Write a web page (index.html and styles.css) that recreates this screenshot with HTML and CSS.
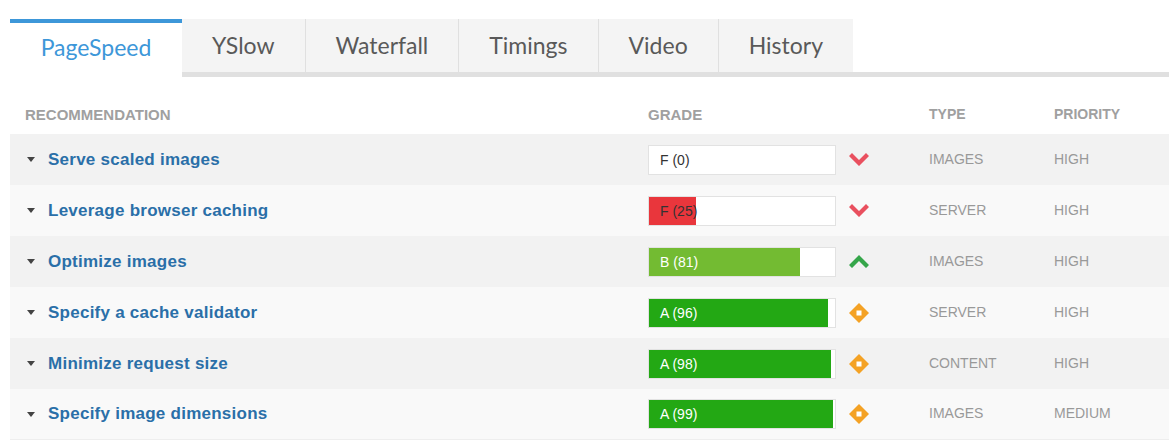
FILE: index.html
```html
<!DOCTYPE html>
<html>

<head>
    <meta charset="UTF-8">
    <link rel="stylesheet" href="styles.css">
</head>

<body>
    <div id="report">
        <ul class="tabs">
            <li class="tab active">PageSpeed</li>
            <li class="tab">YSlow</li>
            <li class="tab">Waterfall</li>
            <li class="tab">Timings</li>
            <li class="tab">Video</li>
            <li class="tab">History</li>
        </ul>

        <div class="rules">
            <div class="rule head">
                <div class="c_name">Recommendation</div>
                <div class="c_grade">Grade</div>
                <div class="c_type">Type</div>
                <div class="c_prio">Priority</div>
            </div>

            <div class="rule odd">
                <div class="c_name"><span class="caret"></span><a href="#">Serve scaled images</a></div>
                <div class="c_grade">
                    <div class="bar"><div class="fill f_red" style="width: 0%"></div><span class="score dark">F (0)</span></div>
                    <svg class="trend" width="20" height="13" viewBox="0 0 20 13"><path d="M0 3 L3 0 L10 7 L17 0 L20 3 L10 13 Z" fill="#e9505f"/></svg>
                </div>
                <div class="c_type">IMAGES</div>
                <div class="c_prio">HIGH</div>
            </div>

            <div class="rule even">
                <div class="c_name"><span class="caret"></span><a href="#">Leverage browser caching</a></div>
                <div class="c_grade">
                    <div class="bar"><div class="fill f_red" style="width: 25%"></div><span class="score dark">F (25)</span></div>
                    <svg class="trend" width="20" height="13" viewBox="0 0 20 13"><path d="M0 3 L3 0 L10 7 L17 0 L20 3 L10 13 Z" fill="#e9505f"/></svg>
                </div>
                <div class="c_type">SERVER</div>
                <div class="c_prio">HIGH</div>
            </div>

            <div class="rule odd">
                <div class="c_name"><span class="caret"></span><a href="#">Optimize images</a></div>
                <div class="c_grade">
                    <div class="bar"><div class="fill f_lime" style="width: 81%"></div><span class="score">B (81)</span></div>
                    <svg class="trend" width="20" height="13" viewBox="0 0 20 13"><path d="M0 10 L10 0 L20 10 L17 13 L10 6 L3 13 Z" fill="#35a64a"/></svg>
                </div>
                <div class="c_type">IMAGES</div>
                <div class="c_prio">HIGH</div>
            </div>

            <div class="rule even">
                <div class="c_name"><span class="caret"></span><a href="#">Specify a cache validator</a></div>
                <div class="c_grade">
                    <div class="bar"><div class="fill f_green" style="width: 96%"></div><span class="score">A (96)</span></div>
                    <svg class="trend" width="20" height="20" viewBox="0 0 20 20"><path d="M10 0 L20 10 L10 20 L0 10 Z" fill="#f4a225"/><rect x="7.5" y="7.5" width="5" height="5" fill="#fff"/></svg>
                </div>
                <div class="c_type">SERVER</div>
                <div class="c_prio">HIGH</div>
            </div>

            <div class="rule odd">
                <div class="c_name"><span class="caret"></span><a href="#">Minimize request size</a></div>
                <div class="c_grade">
                    <div class="bar"><div class="fill f_green" style="width: 98%"></div><span class="score">A (98)</span></div>
                    <svg class="trend" width="20" height="20" viewBox="0 0 20 20"><path d="M10 0 L20 10 L10 20 L0 10 Z" fill="#f4a225"/><rect x="7.5" y="7.5" width="5" height="5" fill="#fff"/></svg>
                </div>
                <div class="c_type">CONTENT</div>
                <div class="c_prio">HIGH</div>
            </div>

            <div class="rule even">
                <div class="c_name"><span class="caret"></span><a href="#">Specify image dimensions</a></div>
                <div class="c_grade">
                    <div class="bar"><div class="fill f_green" style="width: 99%"></div><span class="score">A (99)</span></div>
                    <svg class="trend" width="20" height="20" viewBox="0 0 20 20"><path d="M10 0 L20 10 L10 20 L0 10 Z" fill="#f4a225"/><rect x="7.5" y="7.5" width="5" height="5" fill="#fff"/></svg>
                </div>
                <div class="c_type">IMAGES</div>
                <div class="c_prio">MEDIUM</div>
            </div>
        </div>
    </div>
</body>

</html>
```

FILE: styles.css
```css
body {
    padding: 0;
    margin: 0;
    background-color: #ffffff;
    font-family: "Liberation Sans", Arial, sans-serif;
}

#report {
    padding-top: 19px;
    margin-left: 10px;
}

/* tabs */

.tabs {
    display: flex;
    margin: 0;
    padding: 0;
    list-style: none;
    border-bottom: 5px solid #e0e0e0;
}

.tabs .tab {
    height: 53px;
    line-height: 53px;
    padding: 0 30px;
    background-color: #f4f4f4;
    font-family: Lato, "Open Sans", sans-serif;
    font-size: 23px;
    color: #595959;
    box-sizing: border-box;
}

.tabs .tab:not(.active) + .tab {
    border-left: 1px solid #e0e0e0;
}

.tabs .active {
    width: 172px;
    height: 58px;
    margin-bottom: -5px;
    padding: 0;
    text-align: center;
    line-height: 49px;
    background-color: #ffffff;
    border-top: 4px solid #3d97d9;
    color: #3d97d9;
}

/* rules table */

.rules {
    margin-top: 17px;
}

.rule {
    display: grid;
    grid-template-columns: 623px 281px 125px 1fr;
    align-items: center;
    height: 51px;
}

.rule > div {
    padding-left: 15px;
}

.rule.head {
    height: 40px;
    font-size: 15px;
    font-weight: bold;
    color: #a0a0a0;
    text-transform: uppercase;
}

.rule.odd {
    background-color: #f2f2f2;
}

.rule.even {
    background-color: #f9f9f9;
}

.rule:last-child {
    border-bottom: 1px solid #eeeeee;
    height: 50px;
}

.c_name {
    display: flex;
    align-items: center;
}

.c_name .caret {
    width: 0;
    height: 0;
    margin-left: 2px;
    margin-right: 13px;
    border-left: 4px solid transparent;
    border-right: 4px solid transparent;
    border-top: 5px solid #444444;
}

.c_name a {
    font-size: 17px;
    font-weight: bold;
    letter-spacing: 0.25px;
    color: #2a6fa8;
    text-decoration: none;
}

.c_grade {
    display: flex;
    align-items: center;
}

.bar {
    position: relative;
    width: 188px;
    height: 30px;
    background-color: #ffffff;
    border: 1px solid #e2e2e2;
    box-sizing: border-box;
}

.bar .fill {
    height: 28px;
}

.f_red {
    background-color: #e9363c;
}

.f_lime {
    background-color: #73bb32;
}

.f_green {
    background-color: #23a814;
}

.bar .score {
    position: absolute;
    left: 11px;
    top: 0;
    line-height: 28px;
    font-size: 14px;
    color: #ffffff;
}

.bar .dark {
    color: #333333;
}

.trend {
    margin-left: 13px;
}

.c_type,
.c_prio {
    font-size: 14px;
    color: #999999;
    padding-bottom: 2px;
}

.rule.head .c_type,
.rule.head .c_prio {
    color: #a0a0a0;
    padding-bottom: 0;
}
```
